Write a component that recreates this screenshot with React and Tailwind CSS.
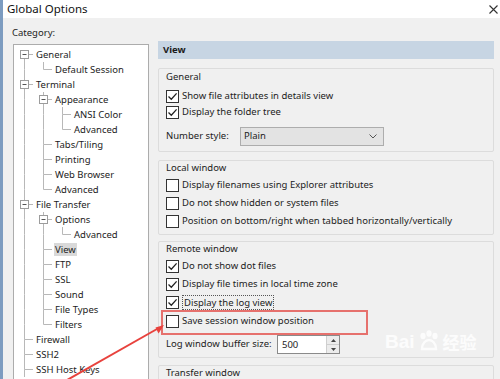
import React from 'react'

const treeItems = [
  { label: 'General', level: 0, exp: true },
  { label: 'Default Session', level: 1 },
  { label: 'Terminal', level: 0, exp: true },
  { label: 'Appearance', level: 1, exp: true },
  { label: 'ANSI Color', level: 2 },
  { label: 'Advanced', level: 2 },
  { label: 'Tabs/Tiling', level: 1 },
  { label: 'Printing', level: 1 },
  { label: 'Web Browser', level: 1 },
  { label: 'Advanced', level: 1 },
  { label: 'File Transfer', level: 0, exp: true },
  { label: 'Options', level: 1, exp: true },
  { label: 'Advanced', level: 2 },
  { label: 'View', level: 1, selected: true },
  { label: 'FTP', level: 1 },
  { label: 'SSL', level: 1 },
  { label: 'Sound', level: 1 },
  { label: 'File Types', level: 1 },
  { label: 'Filters', level: 1 },
  { label: 'Firewall', level: 0 },
  { label: 'SSH2', level: 0 },
  { label: 'SSH Host Keys', level: 0, more: true },
]

// work out which connector lines each row needs
function buildRows(items) {
  return items.map((it, i) => {
    const nextSib = (lvl) => {
      for (let j = i + 1; j < items.length; j++) {
        if (items[j].level < lvl) return false
        if (items[j].level === lvl) return true
      }
      return false
    }
    const cont = []
    for (let k = 0; k < it.level; k++) cont.push(nextSib(k))
    return { ...it, cont, below: it.more || nextSib(it.level), above: i > 0 }
  })
}

const LINE = '#b8b8b8'

function TreeCell({ above, below, exp, stub }) {
  return (
    <svg width="19" height="15" className="shrink-0">
      {above && <line x1="9.5" y1="0" x2="9.5" y2="7.5" stroke={LINE} />}
      {below && <line x1="9.5" y1="7.5" x2="9.5" y2="15" stroke={LINE} />}
      {stub && <line x1="9.5" y1="7.5" x2="18" y2="7.5" stroke={LINE} />}
      {exp && (
        <g>
          <rect x="5.5" y="3.5" width="8" height="8" fill="#fff" stroke="#9c9c9c" />
          <line x1="7.5" y1="7.5" x2="11.5" y2="7.5" stroke="#555" />
        </g>
      )}
    </svg>
  )
}

function Tree() {
  const rows = buildRows(treeItems)
  return (
    <div className="ml-[10px] w-[136px] h-[400px] border border-[#acacac] bg-white pl-[1px] pt-[2px] overflow-hidden">
      {rows.map((r, i) => (
        <div key={i} className="flex h-[15px] items-center whitespace-nowrap">
          {r.cont.map((c, k) => (
            <TreeCell key={k} above={c} below={c} />
          ))}
          <TreeCell above={r.above} below={r.below} exp={r.exp} stub />
          <span
            className={`ml-[1px] leading-[13px] px-[1px] ${r.selected ? 'bg-[#d9d9d9]' : ''}`}
          >
            {r.label}
          </span>
        </div>
      ))}
    </div>
  )
}

function Check({ checked, label, focus, className = '' }) {
  return (
    <div className={`flex items-center gap-[3px] ${className}`}>
      <span className="w-[13px] h-[13px] border border-[#333] bg-white flex items-center justify-center shrink-0">
        {checked && (
          <svg width="11" height="11" viewBox="0 0 11 11">
            <path d="M1.5 5.5 L4.3 8.3 L9.6 2.4" fill="none" stroke="#222" strokeWidth="1.3" />
          </svg>
        )}
      </span>
      <span className={focus ? 'border border-dotted border-[#555] px-[1px] leading-[13px]' : ''}>{label}</span>
    </div>
  )
}

function Group({ title, className = '', children }) {
  return (
    <div className={`border border-[#dcdcdc] rounded-[2px] px-[7px] ${className}`}>
      <div className="h-[14px] leading-[14px]">{title}</div>
      {children}
    </div>
  )
}

export default function App() {
  return (
    <div className="relative w-[500px] h-[379px] overflow-hidden flex bg-[#f0f0f0] text-[#1c1c1c] text-[9.5px] font-['Noto_Sans','Liberation_Sans',sans-serif]">
      {/* window edge behind */}
      <div className="w-[3px] shrink-0 bg-[#7d9cc0]" />

      <div className="flex-1 flex flex-col min-h-0">
        {/* title bar */}
        <div className="h-[18px] shrink-0 bg-white flex items-center justify-between pl-[4px] pr-[2px]">
          <span className="text-[11.5px] leading-[14px] text-[#111]">Global Options</span>
          <svg width="9" height="9" viewBox="0 0 9 9">
            <path d="M0.5 0.5 L8.5 8.5 M8.5 0.5 L0.5 8.5" stroke="#333" strokeWidth="1.1" />
          </svg>
        </div>

        <div className="flex shrink-0">
          {/* category tree */}
          <div className="w-[152px] shrink-0 pt-[8px]">
            <div className="pl-[9px] h-[14px] leading-[14px]">Category:</div>
            <div className="mt-[4px]">
              <Tree />
            </div>
          </div>

          {/* options panel */}
          <div className="ml-[3px] w-[336px] pt-[23px]">
            <div className="h-[18px] bg-[#c7d5e3] pl-[5px] flex items-center font-bold text-[#1a1a1a]">View</div>

            <Group title="General" className="mt-[9px] pt-[1px] pb-[5px]">
              <Check checked label="Show file attributes in details view" className="mt-[4px] h-[16px]" />
              <Check checked label="Display the folder tree" className="h-[16px]" />
              <div className="flex items-center mt-[7px] h-[19px]">
                <span className="w-[74px]">Number style:</span>
                <div className="w-[144px] h-[19px] border border-[#adadad] bg-[#e3e3e3] flex items-center justify-between pl-[3px] pr-[6px]">
                  <span>Plain</span>
                  <svg width="8" height="5" viewBox="0 0 8 5">
                    <path d="M0.5 0.5 L4 4 L7.5 0.5" fill="none" stroke="#555" strokeWidth="1" />
                  </svg>
                </div>
              </div>
            </Group>

            <Group title="Local window" className="mt-[8px] pb-[4px]">
              <Check label="Display filenames using Explorer attributes" className="mt-[1px] h-[18px]" />
              <Check label="Do not show hidden or system files" className="h-[18px]" />
              <Check label="Position on bottom/right when tabbed horizontally/vertically" className="h-[18px]" />
            </Group>

            <Group title="Remote window" className="mt-[6px] pb-[3px]">
              <Check checked label="Do not show dot files" className="mt-[1px] h-[18px]" />
              <Check checked label="Display file times in local time zone" className="h-[18px]" />
              <Check checked focus label="Display the log view" className="h-[18px]" />
              <div className="relative">
                <Check label="Save session window position" className="h-[20px]" />
                {/* red annotation box */}
                <div className="absolute -left-[5px] -top-[1px] w-[207px] h-[25px] border-2 border-[#e6716d]" />
              </div>
              <div className="flex items-center mt-[4px] h-[19px]">
                <span className="w-[111px]">Log window buffer size:</span>
                <div className="flex h-[19px] border border-[#8a8a8a] bg-white">
                  <span className="w-[48px] pl-[4px] leading-[17px]">500</span>
                  <div className="w-[13px] flex flex-col border-l border-[#cfcfcf] bg-[#ececec]">
                    <div className="flex-1 flex items-center justify-center border-b border-[#cfcfcf]">
                      <svg width="5" height="3" viewBox="0 0 5 3"><path d="M0 3 L2.5 0 L5 3Z" fill="#444" /></svg>
                    </div>
                    <div className="flex-1 flex items-center justify-center">
                      <svg width="5" height="3" viewBox="0 0 5 3"><path d="M0 0 L2.5 3 L5 0Z" fill="#444" /></svg>
                    </div>
                  </div>
                </div>
              </div>
            </Group>

            <Group title="Transfer window" className="mt-[7px] h-[40px]" />
          </div>
        </div>
      </div>

      {/* watermark */}
      <div className="absolute left-[385px] top-[330px] flex items-end gap-[2px] text-white/80 pointer-events-none">
        <span className="text-[19px] leading-[20px] font-bold font-['Liberation_Sans',sans-serif]">Bai</span>
        <svg width="24" height="22" viewBox="0 0 24 22" className="opacity-80">
          <ellipse cx="6" cy="6" rx="2.6" ry="3.2" fill="#fff" />
          <ellipse cx="12" cy="3.5" rx="2.6" ry="3.2" fill="#fff" />
          <ellipse cx="18" cy="6" rx="2.6" ry="3.2" fill="#fff" />
          <path d="M5 19 C5 13 9 10 12 10 C15 10 19 13 19 19 Z" fill="none" stroke="#fff" strokeWidth="2.5" />
        </svg>
        <span className="text-[17px] leading-[20px] font-bold font-['Noto_Sans_CJK_SC',sans-serif]">经验</span>
      </div>

      {/* red arrow annotation */}
      <svg width="500" height="379" className="absolute inset-0 pointer-events-none">
        <line x1="60" y1="384" x2="157" y2="329" stroke="#e8423d" strokeWidth="2" />
        <polygon points="164,325 155.5,327.5 158.5,333.5" fill="#e8423d" />
      </svg>
    </div>
  )
}
